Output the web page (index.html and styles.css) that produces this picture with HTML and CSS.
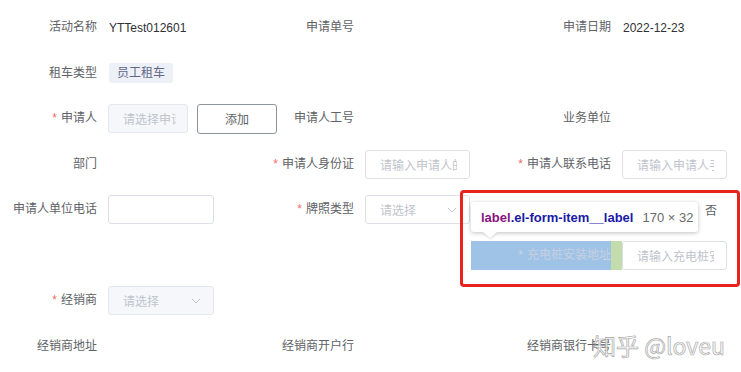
FILE: index.html
```html
<!DOCTYPE html>
<html lang="zh-CN">
<head>
<meta charset="utf-8">
<title>表单</title>
<link rel="stylesheet" href="styles.css">
</head>
<body>
<div class="page">
  <div class="form">
    <!-- row 1 -->
    <div class="item"><label class="lbl">活动名称</label><div class="ctl"><span class="val">YTTest012601</span></div></div>
    <div class="item"><label class="lbl">申请单号</label><div class="ctl"></div></div>
    <div class="item"><label class="lbl">申请日期</label><div class="ctl"><span class="val">2022-12-23</span></div></div>
    <!-- row 2 -->
    <div class="item"><label class="lbl">租车类型</label><div class="ctl"><span class="tag">员工租车</span></div></div>
    <div class="item"></div>
    <div class="item"></div>
    <!-- row 3 -->
    <div class="item"><label class="lbl"><span class="req">*</span>申请人</label><div class="ctl"><div class="input disabled w80"><span class="ph">请选择申请人</span></div><button class="btn">添加</button></div></div>
    <div class="item"><label class="lbl">申请人工号</label><div class="ctl"></div></div>
    <div class="item"><label class="lbl">业务单位</label><div class="ctl"></div></div>
    <!-- row 4 -->
    <div class="item"><label class="lbl">部门</label><div class="ctl"></div></div>
    <div class="item"><label class="lbl"><span class="req">*</span>申请人身份证</label><div class="ctl"><div class="input"><span class="ph">请输入申请人的身份证</span></div></div></div>
    <div class="item"><label class="lbl"><span class="req">*</span>申请人联系电话</label><div class="ctl"><div class="input"><span class="ph">请输入申请人手机号</span></div></div></div>
    <!-- row 5 -->
    <div class="item"><label class="lbl">申请人单位电话</label><div class="ctl"><div class="input wide"><span class="ph"></span></div></div></div>
    <div class="item"><label class="lbl"><span class="req">*</span>牌照类型</label><div class="ctl"><div class="input select"><span class="ph">请选择</span><svg class="chev" width="10" height="6" viewBox="0 0 10 6"><polyline points="1,1 5,5 9,1" fill="none" stroke="#c0c4cc" stroke-width="1"/></svg></div></div></div>
    <div class="item"><label class="lbl">是否安装充电桩</label><div class="ctl"><div class="radios"><span class="radio">是</span><span class="radio">否</span></div></div></div>
    <!-- row 6 -->
    <div class="item"></div>
    <div class="item"></div>
    <div class="item"><label class="lbl hl"><span class="req">*</span>充电桩安装地址</label><div class="ctl"><div class="input"><span class="ph">请输入充电桩安装地址</span></div></div></div>
    <!-- row 7 -->
    <div class="item"><label class="lbl"><span class="req">*</span>经销商</label><div class="ctl"><div class="input select disabled wide"><span class="ph">请选择</span><svg class="chev" width="10" height="6" viewBox="0 0 10 6"><polyline points="1,1 5,5 9,1" fill="none" stroke="#c0c4cc" stroke-width="1"/></svg></div></div></div>
    <div class="item"></div>
    <div class="item"></div>
    <!-- row 8 -->
    <div class="item"><label class="lbl">经销商地址</label><div class="ctl"></div></div>
    <div class="item"><label class="lbl">经销商开户行</label><div class="ctl"></div></div>
    <div class="item"><label class="lbl">经销商银行卡号</label><div class="ctl"></div></div>
  </div>

  <div class="redbox"></div>
  <div class="tip"><span class="tag-name">label</span><span class="cls">.el-form-item__label</span><span class="dim">170 × 32</span></div>
  <div class="watermark">知乎 @loveu</div>
</div>
</body>
</html>
```
FILE: styles.css
```css
html, body {
  margin: 0;
  padding: 0;
  background: #ffffff;
}
body {
  width: 741px;
  height: 372px;
  overflow: hidden;
  font-family: "Liberation Sans", "Noto Sans CJK SC", sans-serif;
  font-size: 12px;
  color: #606266;
}
.page {
  position: relative;
  width: 741px;
  height: 372px;
  overflow: hidden;
}
.form {
  display: grid;
  grid-template-columns: repeat(3, 257px);
  grid-auto-rows: 29px;
  row-gap: 16.5px;
  margin-left: -43px;
  padding-top: 13px;
}
.item {
  display: flex;
  align-items: center;
  min-width: 0;
}
.lbl {
  flex: 0 0 151px;
  box-sizing: border-box;
  height: 29px;
  line-height: 29px;
  padding-right: 11px;
  text-align: right;
  color: #606266;
  white-space: nowrap;
}
.req {
  color: #f56c6c;
  margin-right: 4px;
}
.lbl.hl {
  background: linear-gradient(#9fc3e7, #9fc3e7) content-box, #c3dcab;
  color: #c6d0e2;
}
.lbl.hl .req {
  color: #ccd5e4;
}
.ctl {
  display: flex;
  align-items: center;
  flex: 0 0 auto;
}
.val {
  color: #303133;
  padding-left: 1px;
}
.tag {
  display: inline-block;
  height: 20px;
  line-height: 20px;
  padding: 0 8px;
  margin-left: 1px;
  background: #eef0f8;
  color: #5f6786;
  border-radius: 3px;
}
.input {
  box-sizing: border-box;
  display: flex;
  align-items: center;
  width: 105px;
  height: 29px;
  padding: 0 12px 0 14px;
  border: 1px solid #dcdfe6;
  border-radius: 3px;
  background: #fff;
  flex-shrink: 0;
}
.input.w80 {
  width: 80px;
  padding-right: 11px;
}
.input.wide {
  width: 106px;
}
.input.disabled {
  background: #f5f7fa;
  border-color: #e4e7ed;
}
.ph {
  flex: 1 1 0;
  min-width: 0;
  overflow: hidden;
  white-space: nowrap;
  color: #c0c4cc;
}
.input.select {
  padding-right: 12px;
}
.chev {
  flex: 0 0 auto;
}
.btn {
  box-sizing: border-box;
  flex-shrink: 0;
  width: 80px;
  height: 30px;
  margin-left: 9px;
  border: 1px solid #8e949e;
  border-radius: 3px;
  background: #fff;
  color: #606266;
  font-family: inherit;
  font-size: 12px;
  padding: 0;
}
.radios {
  display: flex;
  gap: 28px;
  padding-left: 43px;
  color: #606266;
}
.redbox {
  position: absolute;
  left: 460px;
  top: 190px;
  width: 280px;
  height: 97px;
  box-sizing: border-box;
  border: 3px solid #e8231d;
  border-radius: 4px;
}
.tip {
  position: absolute;
  left: 471px;
  top: 202px;
  width: 227px;
  height: 30px;
  box-sizing: border-box;
  padding-left: 10px;
  display: flex;
  align-items: center;
  background: #fff;
  border-radius: 3px;
  box-shadow: 0 1px 4px rgba(0, 0, 0, 0.25);
  font-family: "Liberation Sans", sans-serif;
  font-size: 13px;
  white-space: nowrap;
}
.tip::after {
  content: "";
  position: absolute;
  left: 12px;
  top: 30px;
  border-left: 7px solid transparent;
  border-right: 7px solid transparent;
  border-top: 6px solid #fff;
  filter: drop-shadow(0 1px 1px rgba(0, 0, 0, 0.15));
}
.tag-name {
  color: #881280;
  font-weight: bold;
}
.cls {
  color: #1a1aa6;
  font-weight: bold;
}
.dim {
  color: #6a6a6a;
  margin-left: 9px;
  font-size: 13px;
}
.watermark {
  position: absolute;
  left: 593px;
  top: 330px;
  font-family: "Noto Sans CJK SC", "Liberation Sans", sans-serif;
  font-size: 23px;
  line-height: 30px;
  color: rgba(255, 255, 255, 0.75);
  -webkit-text-stroke: 0.7px #a8a8a8;
  white-space: nowrap;
}
```
